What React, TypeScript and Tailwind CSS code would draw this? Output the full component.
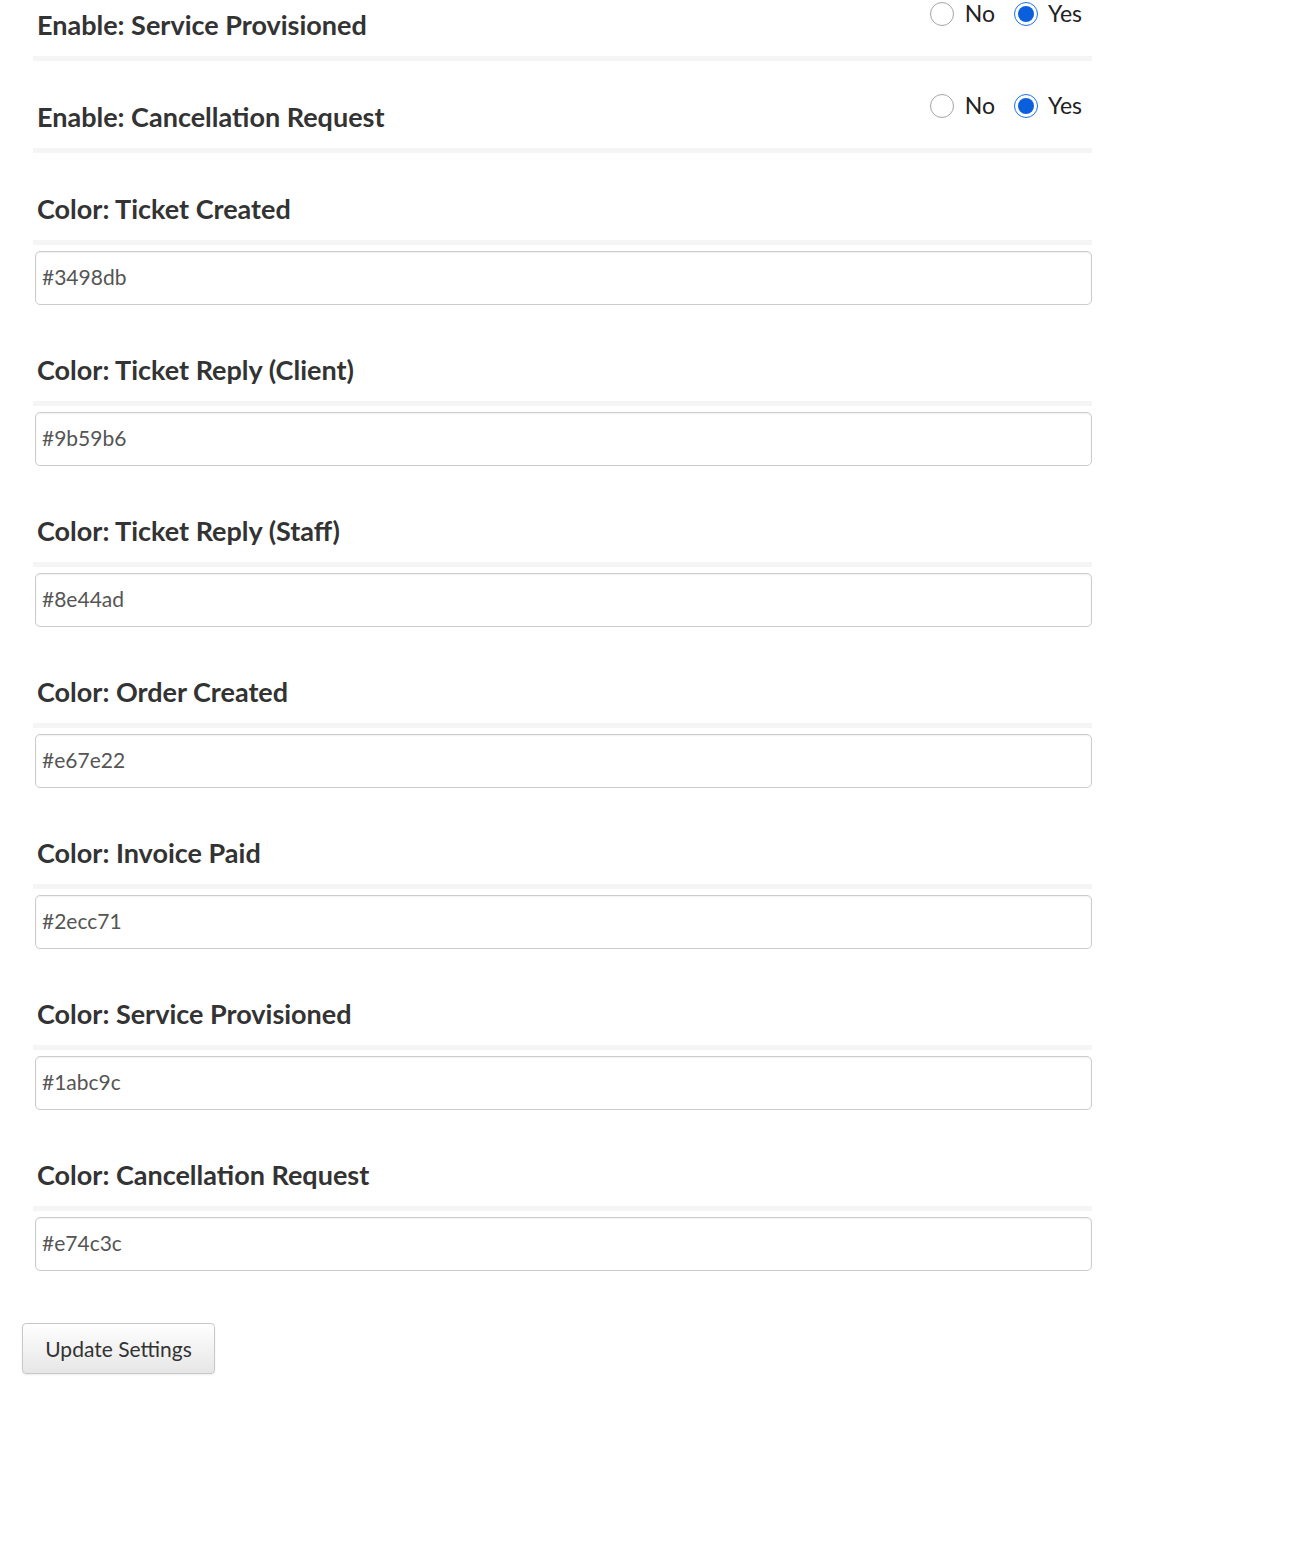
import React from 'react';

const enableRows = ['Enable: Service Provisioned', 'Enable: Cancellation Request'];

const colorRows = [
  { label: 'Color: Ticket Created', value: '#3498db' },
  { label: 'Color: Ticket Reply (Client)', value: '#9b59b6' },
  { label: 'Color: Ticket Reply (Staff)', value: '#8e44ad' },
  { label: 'Color: Order Created', value: '#e67e22' },
  { label: 'Color: Invoice Paid', value: '#2ecc71' },
  { label: 'Color: Service Provisioned', value: '#1abc9c' },
  { label: 'Color: Cancellation Request', value: '#e74c3c' },
];

function Radio({ checked }: { checked?: boolean }) {
  if (checked) {
    return (
      <span className="flex h-[24px] w-[24px] items-center justify-center rounded-full border border-[#1a6fe8] bg-white">
        <span className="h-[16px] w-[16px] rounded-full bg-[#0b5fdc]" />
      </span>
    );
  }
  return <span className="h-[24px] w-[24px] rounded-full border border-[#a3a3ad] bg-white" />;
}

function Heading({ children }: { children: React.ReactNode }) {
  return <h3 className="pl-[4px] text-[27px] font-bold leading-[30px] text-[#333]">{children}</h3>;
}

function Bar() {
  return <div className="mt-[16px] h-[5px] bg-[#f5f5f5]" />;
}

export default function App() {
  return (
    <div className="min-h-[1551px] bg-white font-['Lato','Liberation_Sans',sans-serif]">
      <div className="ml-[33px] w-[1059px] pt-[10px]">
        {enableRows.map((label, i) => (
          <div key={label} className={i > 0 ? 'mt-[41px]' : ''}>
            <div className="flex items-start justify-between">
              <Heading>{label}</Heading>
              {/* radio group sits a bit above the label */}
              <div className="-mt-[10px] mr-[10px] flex items-center text-[23px] leading-[27px] text-[#222]">
                <Radio />
                <span className="ml-[11px]">No</span>
                <span className="ml-[19px] flex"><Radio checked /></span>
                <span className="ml-[10px]">Yes</span>
              </div>
            </div>
            <Bar />
          </div>
        ))}

        {colorRows.map((row, i) => (
          <div key={row.label} className={i > 0 ? 'mt-[50px]' : 'mt-[41px]'}>
            <Heading>{row.label}</Heading>
            <Bar />
            <input
              type="text"
              defaultValue={row.value}
              className="ml-[2px] mt-[6px] block h-[54px] w-[1057px] rounded-[5px] border border-[#cccccc] bg-white px-[6px] pb-[4px] text-[21px] text-[#555] shadow-[inset_0_1px_2px_rgba(0,0,0,0.06)] outline-none"
            />
          </div>
        ))}
      </div>

      <button className="ml-[22px] mt-[52px] h-[51px] w-[193px] rounded-[4px] border border-[#c8c8c8] bg-gradient-to-b from-white to-[#e6e6e6] text-[21px] text-[#333] shadow-[0_1px_2px_rgba(0,0,0,0.08)]">
        Update Settings
      </button>
    </div>
  );
}
